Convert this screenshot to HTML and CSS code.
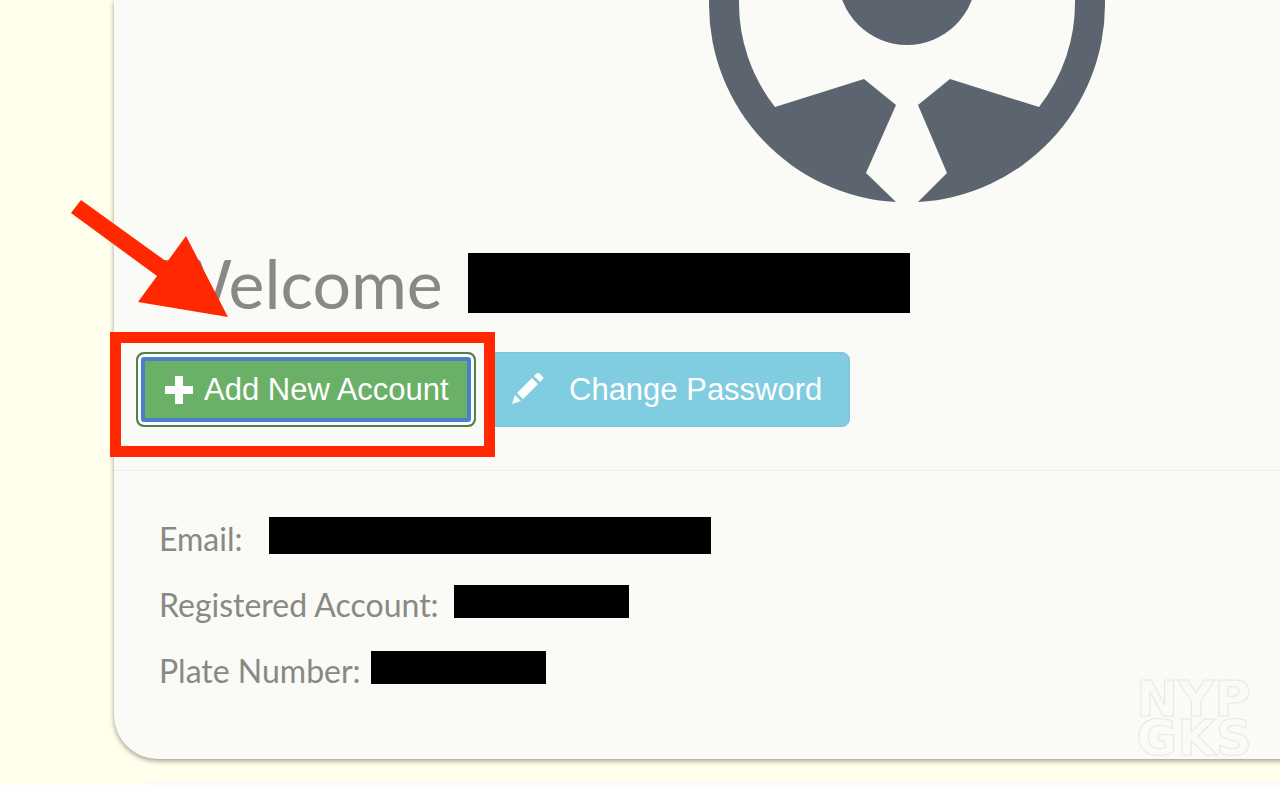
FILE: index.html
```
<!DOCTYPE html>
<html lang="en">
<head>
    <meta charset="UTF-8">
    <meta name="viewport" content="width=device-width, initial-scale=1.0">
    <title>My Account</title>
    <link rel="stylesheet" href="styles.css">
</head>
<body>
    <main class="page">
        <section class="card">
            <svg class="avatar" viewBox="0 0 396 204" aria-hidden="true">
                <circle cx="198" cy="-24" r="69"/>
                <path d="M0 0V5A198 198 0 0 0 187 202L157 173L187 105L155 79L66 107A168 168 0 0 1 30 0Z"/>
                <path d="M396 0V5A198 198 0 0 1 209 202L238 173L209 105L241 79L330 107A168 168 0 0 0 366 0Z"/>
            </svg>

            <div class="welcome">
                <h1>Welcome</h1>
                <span class="redacted redacted-name"></span>
                <svg class="arrow" viewBox="0 0 160 120" aria-hidden="true">
                    <path d="M11 0L97 62L116 36L158 117L68 102L87 76L1 13Z"/>
                </svg>
            </div>

            <div class="actions">
                <div class="highlighted">
                    <button type="button" class="btn btn-success">
                        <svg class="plus" viewBox="0 0 28 28" aria-hidden="true">
                            <path d="M10 0h8v10h10v8H18v10h-8V18H0v-8h10z"/>
                        </svg>
                        Add New Account
                    </button>
                </div>
                <button type="button" class="btn btn-info">
                    <svg class="pencil" viewBox="0 0 32 32" aria-hidden="true">
                        <path d="M0 30L3 21L9 27ZM5 19L20 4L26 10L11 25ZM22 2L24 0Q26 -2 28 0L31 3Q32 5 30 6L28 8Z"/>
                    </svg>
                    Change Password
                </button>
            </div>

            <div class="details">
                <div class="row">
                    <span class="label label-email">Email:</span>
                    <span class="redacted redacted-email"></span>
                </div>
                <div class="row">
                    <span class="label label-account">Registered Account:</span>
                    <span class="redacted"></span>
                </div>
                <div class="row">
                    <span class="label label-plate">Plate Number:</span>
                    <span class="redacted"></span>
                </div>
            </div>

            <div class="watermark">NYP<br>GKS</div>
        </section>

        <section class="card card-next"></section>
    </main>
</body>
</html>
```
FILE: styles.css
```
:root {
    --page-color: #ffffec;
    --card-color: #fafaf6;
    --text-color: #888984;
    --avatar-color: #5c646f;
    --mark-color: #ff2800;
}

*,
*::after {
    margin: 0;
    padding: 0;
    box-sizing: border-box;
}

body {
    background-color: var(--page-color);
    color: var(--text-color);
    font-family: Lato, "Open Sans", sans-serif;
}

.page {
    display: flex;
    flex-direction: column;
    min-height: 100vh;
    padding-left: 114px;
    overflow: hidden;
}

.card {
    position: relative;
    margin-right: -20px;
    padding-right: 20px;
    background-color: var(--card-color);
    border-radius: 0 0 0 44px;
    box-shadow: 0 2px 5px rgba(60, 60, 40, 0.5);
}

.card-next {
    flex: 1;
    margin-top: 22px;
    margin-left: 32px;
    border-radius: 0;
    box-shadow: none;
}

.avatar {
    display: block;
    width: 396px;
    height: 204px;
    margin-left: 51%;
    fill: var(--avatar-color);
}

.redacted {
    width: 175px;
    height: 33px;
    margin-bottom: 6px;
    background-color: #000;
}

.welcome {
    position: relative;
    display: flex;
    align-items: center;
    height: 148px;
    padding: 10px 0 0 24px;
}

h1 {
    width: 330px;
    padding-left: 24px;
    font-size: 68px;
    font-weight: 400;
    line-height: 80px;
}

.redacted-name {
    width: 442px;
    height: 60px;
    margin-bottom: 0;
}

.arrow {
    position: absolute;
    top: -4px;
    left: -44px;
    width: 160px;
    height: 120px;
    fill: var(--mark-color);
}

.actions {
    display: flex;
    gap: 8px;
    height: 119px;
    padding-left: 22px;
    border-bottom: 1px solid #eeeeea;
}

.highlighted {
    position: relative;
    width: 340px;
}

/* red frame around the button */
.highlighted::after {
    content: "";
    position: absolute;
    top: -20px;
    left: -26px;
    width: 385px;
    height: 125px;
    border: 11px solid var(--mark-color);
    pointer-events: none;
}

.btn {
    display: flex;
    align-items: center;
    height: 75px;
    border: 0;
    border-radius: 8px;
    color: #fff;
    font-family: "Liberation Sans", Arial, sans-serif;
    font-size: 31px;
    white-space: nowrap;
    cursor: pointer;
}

.btn svg {
    flex: none;
    fill: currentColor;
}

.btn-success {
    width: 340px;
    padding-left: 27px;
    gap: 11px;
    border: 2px solid #527d4c;
    background-color: #6ab067;
    box-shadow: inset 0 0 0 3px #fcfffc, inset 0 0 0 7px #4a7fcb;
}

.btn-info {
    width: 366px;
    padding-left: 27px;
    gap: 25px;
    border: 1px solid #78c4da;
    background-color: #80cce1;
}

.plus {
    width: 28px;
    height: 28px;
}

.pencil {
    width: 32px;
    height: 32px;
    overflow: visible;
}

.details {
    padding: 34px 45px 56px;
}

.row {
    display: flex;
    align-items: center;
    height: 66px;
    font-size: 32px;
}

.label-email {
    width: 110px;
}

.label-account {
    width: 295px;
}

.label-plate {
    width: 212px;
}

.redacted-email {
    width: 442px;
    height: 37px;
}

.watermark {
    position: absolute;
    right: 48px;
    bottom: 1px;
    color: transparent;
    font-family: "DejaVu Sans", sans-serif;
    font-size: 50px;
    font-weight: 700;
    line-height: 39px;
    -webkit-text-stroke: 1px #e7e7e4;
}
```
